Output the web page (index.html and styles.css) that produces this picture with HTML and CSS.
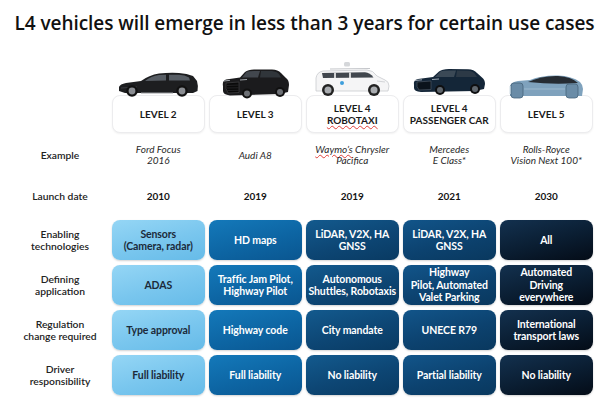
FILE: index.html
```html
<!DOCTYPE html>
<html>
<head>
<meta charset="utf-8">
<link rel="stylesheet" href="styles.css">
</head>
<body>
<div class="slide">
  <h1 class="title">L4 vehicles will emerge in less than 3 years for certain use cases</h1>
  <div class="table">
    <div class="corner"></div>

    <div class="hdr">
      <svg class="car car1" width="82" height="27" viewBox="0 0 82 27">
        <path d="M2 21 L2 17 Q3 14 9 13 L24 11 Q32 5 42 3.5 Q52 2.5 62 3 Q70 3.5 76 6 L80 11 Q81.5 16 80.5 21 L76 23 L8 23 Z" fill="#1d1e20"/>
        <path d="M28 11 Q34 6 42 5 L49 4.8 L49 10.5 Z" fill="#575d64"/>
        <path d="M52 4.8 L62 4.8 Q68 5 72 7.5 L73 10.5 L52 10.5 Z" fill="#575d64"/>
        <path d="M4 18 L20 17" stroke="#3a3c40" stroke-width="1"/>
        <circle cx="15" cy="21" r="5.8" fill="#111"/><circle cx="15" cy="21" r="3.4" fill="#8a8d92"/>
        <circle cx="65" cy="21" r="5.8" fill="#111"/><circle cx="65" cy="21" r="3.4" fill="#8a8d92"/>
        <path d="M24 23 L56 23" stroke="#9a9ca0" stroke-width="1"/>
      </svg>
      <div class="card"><span class="inner">LEVEL 2</span></div>
    </div>

    <div class="hdr">
      <svg class="car car2" width="70" height="32" viewBox="0 0 70 32">
        <path d="M3 19 Q2 14 6 12.5 L20 10.5 L25 5 Q28 2.5 34 2.5 L52 2.5 Q58 2.5 61 6 L66 11 Q69 13 69 18 L68 25 L60 27 L10 28.5 Q3 27.5 3 24 Z" fill="#1b1b1d"/>
        <path d="M22 10.5 L26.5 5 Q28.5 4 34 4 L40 4 L38 10.5 Z" fill="#42474e"/>
        <path d="M41 4 L52 4 Q57 4.5 59 7 L61 10.5 L40 10.5 Z" fill="#30353a"/>
        <path d="M6 16 L19 15 L19 25.5 L8 26 Q5 22 6 16 Z" fill="#0a0a0a" stroke="#4a4a4e" stroke-width="0.6"/>
        <path d="M7 18.5 L18.5 18 M7 21 L18.5 20.8 M7.5 23.5 L18.5 23.3" stroke="#3a3a3e" stroke-width="0.5"/>
        <path d="M4 14 L10 13.3 M20 13 L27 12.5" stroke="#9ea3a8" stroke-width="1"/>
        <circle cx="27" cy="26.5" r="5" fill="#111"/><circle cx="27" cy="26.5" r="3" fill="#6d7075"/>
        <circle cx="60" cy="25" r="5" fill="#111"/><circle cx="60" cy="25" r="3" fill="#6d7075"/>
      </svg>
      <div class="card"><span class="inner">LEVEL 3</span></div>
    </div>

    <div class="hdr">
      <svg class="car car3" width="78" height="35" viewBox="0 0 78 35">
        <rect x="31" y="0" width="6" height="4.5" rx="1.5" fill="#d5d7da"/>
        <path d="M17 7 L57 6.5" stroke="#c4c6ca" stroke-width="1.2"/>
        <path d="M3 27 L3 16 Q4 10 10 9 L54 8 Q60 8 64 14 L72 18 Q76 19.5 76 24 L75 29 L3 29 Z" fill="#f5f5f6" stroke="#c9cbcf" stroke-width="0.8"/>
        <path d="M9 11 L52 10.2 Q57 10.5 60.5 15.5 L10 16 Z" fill="#41474e"/>
        <path d="M22 10.8 L22 16 M37 10.5 L37 16" stroke="#f5f5f6" stroke-width="1.6"/>
        <circle cx="29" cy="21" r="2" fill="#3f9fdc"/>
        <path d="M64 19 L72 20" stroke="#c9cbcf" stroke-width="0.8"/>
        <circle cx="15" cy="28" r="6" fill="#222"/><circle cx="15" cy="28" r="3.5" fill="#a9acb0"/>
        <circle cx="61" cy="28" r="6" fill="#222"/><circle cx="61" cy="28" r="3.5" fill="#a9acb0"/>
      </svg>
      <div class="card"><span class="inner">LEVEL 4<br><span class="squiggle">ROBOTAXI</span></span></div>
    </div>

    <div class="hdr">
      <svg class="car car4" width="76" height="28" viewBox="0 0 76 28">
        <path d="M3 18 Q2 13 7 12 L22 10 L28 4.5 Q31 2 38 2 L57 2.2 Q63 2.5 66 6 L71 10.5 Q74 12.5 74 17 L73 22 L64 24 L10 25 Q3 24.5 3 21 Z" fill="#142638"/>
        <path d="M24 10 L29.5 4.5 Q31.5 3.5 38 3.5 L45 3.5 L43 10 Z" fill="#3b4956"/>
        <path d="M46 3.5 L57 3.7 Q62 4 64 7 L66 10 L45 10 Z" fill="#2c3946"/>
        <path d="M6 15 L20 14 L20 22.5 L8 23 Q5 20 6 15 Z" fill="#0b131b" stroke="#55606b" stroke-width="0.6"/>
        <path d="M4 13.5 L11 12.8 M21 12.5 L28 12" stroke="#aab4bf" stroke-width="0.9"/>
        <circle cx="29" cy="23" r="5" fill="#0e0f11"/><circle cx="29" cy="23" r="3" fill="#5f666d"/>
        <circle cx="64" cy="22" r="5" fill="#0e0f11"/><circle cx="64" cy="22" r="3" fill="#5f666d"/>
      </svg>
      <div class="card"><span class="inner">LEVEL 4<br>PASSENGER CAR</span></div>
    </div>

    <div class="hdr">
      <svg class="car car5" width="76" height="25" viewBox="0 0 76 25">
        <path d="M2 22 L2 12 Q3 8 10 7 L22 6 Q34 1 50 1.5 Q64 2 72 8 Q75 11 75 15 L74 22 Z" fill="#7fa2bd"/>
        <path d="M20 8 Q34 1.5 50 2 Q63 2.5 70 9 Q46 11 20 8 Z" fill="#262c33"/>
        <rect x="3" y="9" width="12" height="15" rx="3" fill="#6a8ca7" stroke="#48657b" stroke-width="0.8"/>
        <rect x="58" y="10" width="12" height="14" rx="3" fill="#6a8ca7" stroke="#48657b" stroke-width="0.8"/>
        <path d="M16 15 L57 15" stroke="#a4bfd3" stroke-width="0.8"/>
        <path d="M2 12 L2 20" stroke="#d9e3ea" stroke-width="1.2"/>
      </svg>
      <div class="card"><span class="inner">LEVEL 5</span></div>
    </div>

    <div class="label">Example</div>
    <div class="ex"><span class="inner">Ford Focus<br>2016</span></div>
    <div class="ex"><span class="inner">Audi A8</span></div>
    <div class="ex"><span class="inner"><span class="squiggle">Waymo’s</span> Chrysler<br>Pacifica</span></div>
    <div class="ex"><span class="inner">Mercedes<br>E Class*</span></div>
    <div class="ex"><span class="inner">Rolls-Royce<br>Vision Next 100*</span></div>

    <div class="label">Launch date</div>
    <div class="year">2010</div>
    <div class="year">2019</div>
    <div class="year">2019</div>
    <div class="year">2021</div>
    <div class="year">2030</div>

    <div class="label">Enabling<br>technologies</div>
    <div class="cell c1">Sensors<br>(Camera, radar)</div>
    <div class="cell c2">HD maps</div>
    <div class="cell c3">LiDAR, V2X, HA<br>GNSS</div>
    <div class="cell c4">LiDAR, V2X, HA<br>GNSS</div>
    <div class="cell c5">All</div>

    <div class="label">Defining<br>application</div>
    <div class="cell c1">ADAS</div>
    <div class="cell c2">Traffic Jam Pilot,<br>Highway Pilot</div>
    <div class="cell c3">Autonomous<br>Shuttles, Robotaxis</div>
    <div class="cell c4">Highway<br>Pilot, Automated<br>Valet Parking</div>
    <div class="cell c5">Automated<br>Driving<br>everywhere</div>

    <div class="label">Regulation<br>change required</div>
    <div class="cell c1">Type approval</div>
    <div class="cell c2">Highway code</div>
    <div class="cell c3">City mandate</div>
    <div class="cell c4">UNECE R79</div>
    <div class="cell c5">International<br>transport laws</div>

    <div class="label">Driver<br>responsibility</div>
    <div class="cell c1">Full liability</div>
    <div class="cell c2">Full liability</div>
    <div class="cell c3">No liability</div>
    <div class="cell c4">Partial liability</div>
    <div class="cell c5">No liability</div>
  </div>
</div>
</body>
</html>
```

FILE: styles.css
```css
html, body {
  margin: 0;
  padding: 0;
  background: #ffffff;
}

body {
  font-family: "Lato", "Open Sans", sans-serif;
  color: #1d1d1f;
}

.slide {
  width: 609px;
  height: 400px;
  overflow: hidden;
}

.title {
  margin: 0;
  padding-top: 12px;
  font-family: "Open Sans", "Lato", sans-serif;
  font-size: 19px;
  line-height: 22px;
  font-weight: 600;
  letter-spacing: -0.05px;
  text-align: center;
  color: #111;
  white-space: nowrap;
}

.table {
  display: grid;
  grid-template-columns: 107.5px repeat(5, 92.5px);
  grid-template-rows: 99px 34px 38px 40px 40px 40px 40px;
  column-gap: 4.5px;
  row-gap: 5px;
}

.hdr {
  display: flex;
  flex-direction: column;
  align-items: center;
  justify-content: flex-end;
}

.car {
  display: block;
  position: relative;
  z-index: 1;
}
.car1 { margin-bottom: -2px; }
.car2 { margin-bottom: -4px; }
.car3 { margin-bottom: -2px; }
.car4 { margin-bottom: 0; }
.car5 { margin-bottom: -4px; }

.inner {
  display: block;
}

.card {
  width: 100%;
  height: 38px;
  box-sizing: border-box;
  border: 1px solid #ececee;
  border-radius: 8px;
  background: #fff;
  box-shadow: 0 1px 2px rgba(0, 0, 0, 0.06);
  display: flex;
  align-items: center;
  justify-content: center;
  text-align: center;
  font-size: 10px;
  line-height: 12px;
  font-weight: 700;
  color: #1a1a1a;
}

.squiggle {
  text-decoration: underline wavy #e0403a;
  text-decoration-thickness: 0.8px;
  text-underline-offset: 1px;
}

.label {
  padding-left: 12.5px;
  display: flex;
  align-items: center;
  justify-content: center;
  text-align: center;
  font-size: 10.3px;
  line-height: 12px;
  font-weight: 600;
  color: #222;
}

.ex {
  display: flex;
  align-items: center;
  justify-content: center;
  text-align: center;
  font-size: 10px;
  line-height: 11px;
  font-style: italic;
  color: #2a2a2a;
}

.year {
  display: flex;
  align-items: center;
  justify-content: center;
  font-size: 10px;
  font-weight: 700;
  color: #141414;
}

.cell {
  display: flex;
  align-items: center;
  justify-content: center;
  text-align: center;
  border-radius: 8px;
  font-size: 10.5px;
  line-height: 12.5px;
  font-weight: 700;
  color: #fff;
  white-space: nowrap;
  letter-spacing: -0.1px;
  box-shadow: 0 1px 2px rgba(0, 0, 0, 0.18);
}

.c1 {
  background: linear-gradient(165deg, #95d6f5 0%, #79c6ee 55%, #66bbe8 100%);
  color: #1b2a3a;
}
.c2 {
  background: linear-gradient(165deg, #1479ba 0%, #0d65a3 55%, #0a5690 100%);
}
.c3 {
  background: linear-gradient(165deg, #135a8e 0%, #0d4674 55%, #093a62 100%);
}
.c4 {
  background: linear-gradient(165deg, #12558a 0%, #0c426f 55%, #09385e 100%);
}
.c5 {
  background: linear-gradient(165deg, #13314f 0%, #0a1d31 55%, #040c17 100%);
}
```
